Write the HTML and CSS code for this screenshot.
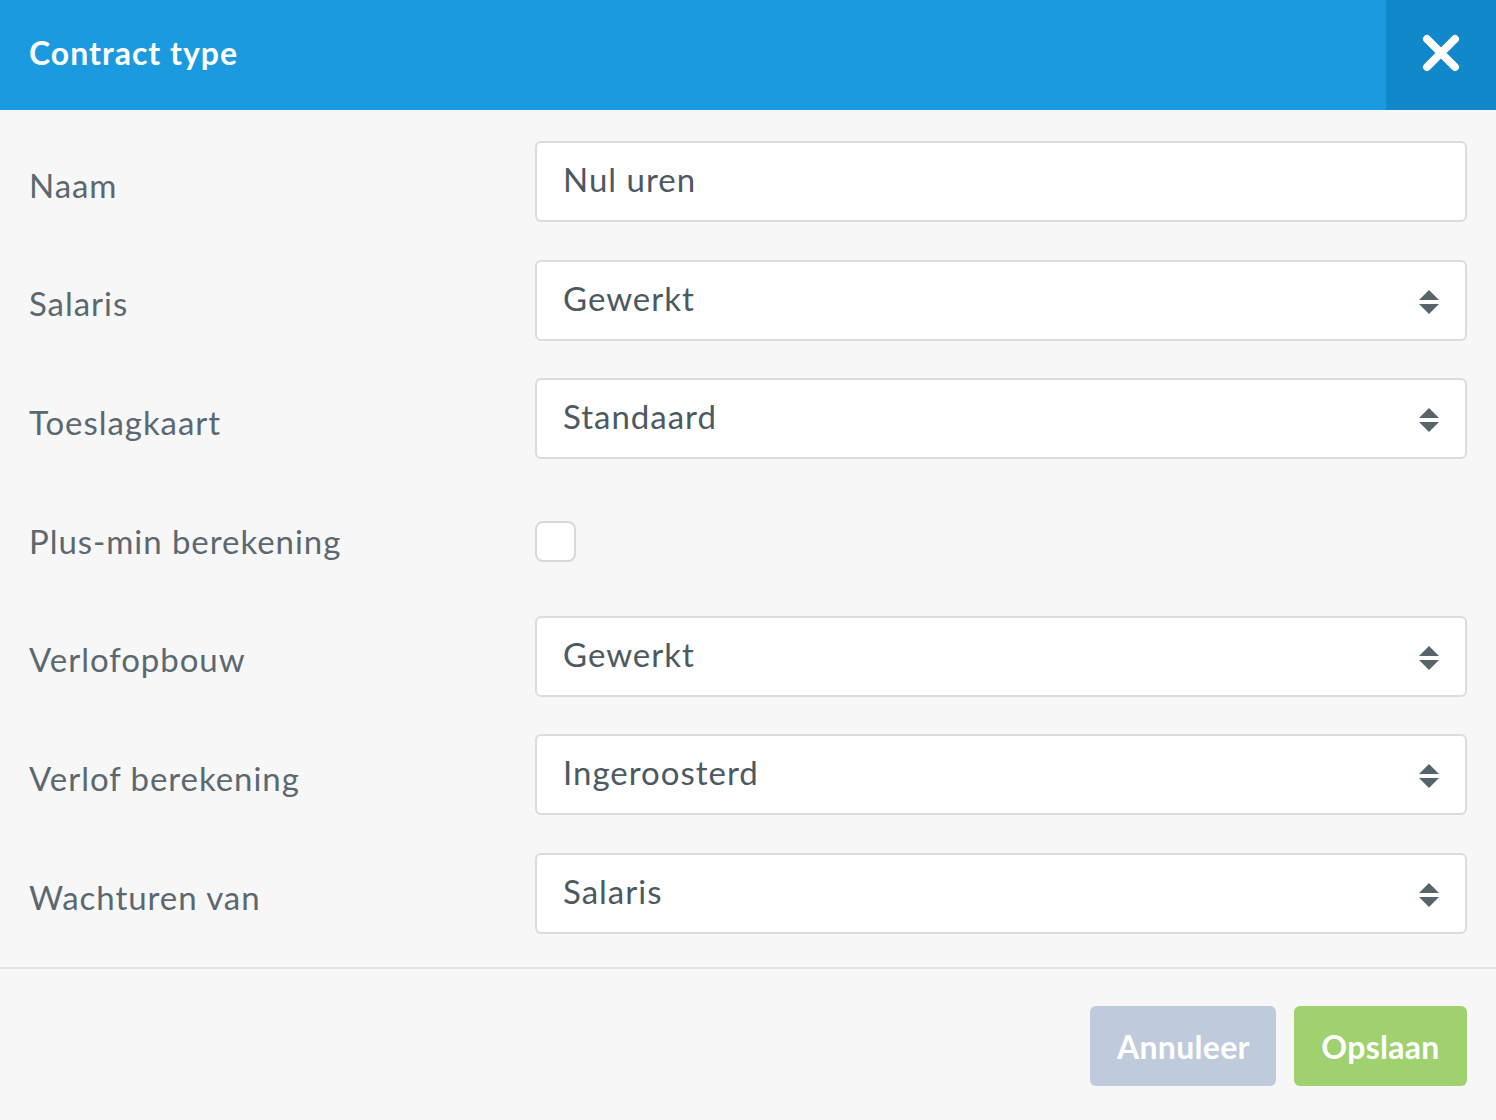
FILE: index.html
```html
<!DOCTYPE html>
<html lang="nl">
<head>
    <meta charset="UTF-8">
    <title>Contract type</title>
    <link rel="stylesheet" href="styles.css">
</head>
<body>
    <div class="modal">
        <header class="modal-header">
            <h1>Contract type</h1>
            <button class="close-btn" aria-label="Sluiten">
                <svg width="38" height="38" viewBox="0 0 38 38">
                    <path d="M5 5 L33 33 M33 5 L5 33" stroke="#fff" stroke-width="8" stroke-linecap="round"/>
                </svg>
            </button>
        </header>

        <form class="modal-body">
            <div class="row">
                <label>Naam</label>
                <div class="field">Nul uren</div>
            </div>
            <div class="row">
                <label>Salaris</label>
                <div class="field select">Gewerkt<span class="arrows"></span></div>
            </div>
            <div class="row">
                <label>Toeslagkaart</label>
                <div class="field select">Standaard<span class="arrows"></span></div>
            </div>
            <div class="row">
                <label>Plus-min berekening</label>
                <div><span class="checkbox"></span></div>
            </div>
            <div class="row">
                <label>Verlofopbouw</label>
                <div class="field select">Gewerkt<span class="arrows"></span></div>
            </div>
            <div class="row">
                <label>Verlof berekening</label>
                <div class="field select">Ingeroosterd<span class="arrows"></span></div>
            </div>
            <div class="row">
                <label>Wachturen van</label>
                <div class="field select">Salaris<span class="arrows"></span></div>
            </div>
        </form>

        <footer class="modal-footer">
            <button class="btn btn-cancel">Annuleer</button>
            <button class="btn btn-save">Opslaan</button>
        </footer>
    </div>
</body>
</html>
```

FILE: styles.css
```css
* {
    box-sizing: border-box;
    margin: 0;
    padding: 0;
    font-family: Lato, 'Open Sans', sans-serif;
}

body {
    background-color: #f7f7f7;
    width: 1496px;
    height: 1120px;
    overflow: hidden;
}

.modal-header {
    display: flex;
    height: 110px;
    background-color: #1b9ae0;
}

.modal-header h1 {
    flex: 1;
    padding-left: 29px;
    color: #fff;
    font-size: 32px;
    font-weight: 700;
    line-height: 106px;
    letter-spacing: 1px;
}

.close-btn {
    width: 110px;
    height: 110px;
    border: none;
    background-color: #1188c9;
    display: flex;
    align-items: center;
    justify-content: center;
    padding-bottom: 4px;
    cursor: pointer;
}

.modal-body {
    display: flex;
    flex-direction: column;
    gap: 37.7px;
    padding: 31px 29px 33px;
    border-bottom: 2px solid #e3e3e3;
}

.row {
    display: grid;
    grid-template-columns: 506px 1fr;
    align-items: center;
    height: 81px;
}

.row label {
    color: #5b6870;
    font-size: 33px;
    padding-top: 6px;
    letter-spacing: 0.95px;
}

.field {
    position: relative;
    height: 81px;
    background: #fff;
    border: 2px solid #dcdcdc;
    border-radius: 6px;
    padding-left: 26px;
    color: #4d5961;
    font-size: 33px;
    line-height: 73px;
    letter-spacing: 1px;
}

.arrows {
    position: absolute;
    right: 26px;
    top: 28px;
    width: 20px;
    height: 24px;
}

.arrows::before,
.arrows::after {
    content: '';
    position: absolute;
    left: 0;
    border-left: 10px solid transparent;
    border-right: 10px solid transparent;
}

.arrows::before {
    top: 0;
    border-bottom: 10px solid #56646c;
}

.arrows::after {
    bottom: 0;
    border-top: 10px solid #56646c;
}

.checkbox {
    display: block;
    width: 41px;
    height: 41px;
    margin-top: 8px;
    background: #fff;
    border: 2px solid #d8d8d8;
    border-radius: 8px;
}

.modal-footer {
    display: flex;
    justify-content: flex-end;
    gap: 18px;
    padding: 37px 29px;
}

.btn {
    height: 80px;
    border: none;
    border-radius: 6px;
    color: #fff;
    font-size: 32px;
    font-weight: 700;
    padding: 0 27px;
    letter-spacing: 0.3px;
    cursor: pointer;
}

.btn-cancel {
    width: 186px;
    background-color: #bfcbdc;
}

.btn-save {
    width: 173px;
    background-color: #a0d16f;
}
```
